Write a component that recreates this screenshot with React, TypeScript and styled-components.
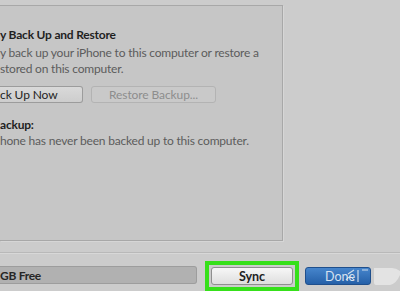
import React from 'react';
import styled, { createGlobalStyle } from 'styled-components';

const GlobalStyle = createGlobalStyle`
  html, body {
    margin: 0;
    padding: 0;
    background: #cccccc;
    overflow: hidden;
  }
  body {
    font-family: Lato, "Open Sans", "DejaVu Sans", sans-serif;
  }
`;

const Page = styled.div`
  width: 400px;
  height: 291px;
  display: flex;
  flex-direction: column;
  background: #cccccc;
  overflow: hidden;
`;

const Panel = styled.div`
  margin-top: 5px;
  width: 283px;
  height: 236px;
  box-sizing: border-box;
  background: #c6c6c6;
  border: 1px solid #a8a8a8;
  border-left: none;
  box-shadow: 1px 1px 0 #d6d6d6;
  padding-top: 21px;
`;

const Heading = styled.div<{ $gap?: number }>`
  font-size: 12px;
  font-weight: 700;
  line-height: 16px;
  letter-spacing: -0.2px;
  color: #1f1f1f;
  white-space: nowrap;
  margin-top: ${(p) => p.$gap ?? 0}px;
`;

const Body = styled.div<{ $gap?: number }>`
  font-size: 12px;
  line-height: 16px;
  letter-spacing: -0.2px;
  color: #5c5c5c;
  white-space: nowrap;
  margin-top: ${(p) => p.$gap ?? 0}px;
`;

const ButtonRow = styled.div`
  display: flex;
  gap: 8px;
  margin-top: 9px;
`;

const PanelButton = styled.div<{ $disabled?: boolean; $cut?: boolean; $w: number }>`
  width: ${(p) => p.$w}px;
  height: 17px;
  box-sizing: border-box;
  display: flex;
  align-items: center;
  justify-content: center;
  font-size: 12px;
  letter-spacing: -0.1px;
  color: ${(p) => (p.$disabled ? '#8d8d8d' : '#1f1f1f')};
  background: ${(p) =>
    p.$disabled ? '#c9c9c9' : 'linear-gradient(#d9d9d9, #cdcdcd)'};
  border: 1px solid ${(p) => (p.$disabled ? '#b3b3b3' : '#9c9c9c')};
  border-radius: 3px;
  ${(p) =>
    p.$cut &&
    `border-left: none; border-top-left-radius: 0; border-bottom-left-radius: 0; justify-content: flex-start;`}
`;

const Band = styled.div`
  height: 11px;
  border-bottom: 1px solid #b9b9b9;
  box-shadow: 0 1px 0 #d8d8d8;
`;

const BottomBar = styled.div`
  flex: 1;
  display: flex;
  align-items: flex-start;
  padding-top: 8px;
`;

const Storage = styled.div`
  width: 197px;
  height: 18px;
  margin-top: 5px;
  box-sizing: border-box;
  background: #b1b1b1;
  border: 1px solid #9d9d9d;
  border-left: none;
  border-radius: 0 3px 3px 0;
  display: flex;
  align-items: center;
  font-size: 12px;
  font-weight: 700;
  letter-spacing: -0.3px;
  color: #262626;
`;

const Highlight = styled.div`
  margin-left: 8px;
  border: 4px solid #36e01a;
  padding: 2px;
`;

const SyncButton = styled.div`
  width: 82px;
  height: 18px;
  box-sizing: border-box;
  display: flex;
  align-items: center;
  justify-content: center;
  background: linear-gradient(#f7f7f7, #dedede);
  border: 1px solid #8f8f8f;
  border-radius: 3px;
  font-size: 12.5px;
  font-weight: 700;
  color: #222;
`;

const DoneButton = styled.div`
  position: relative;
  margin-left: 6px;
  margin-top: 6px;
  width: 66px;
  height: 18px;
  box-sizing: border-box;
  display: flex;
  align-items: center;
  padding-left: 19px;
  background: linear-gradient(#4685cc, #2560a8);
  border: 1px solid #1f4f8c;
  border-radius: 3px;
  font-size: 12.5px;
  color: #d6e2f0;
`;

const Watermark = styled.svg`
  position: absolute;
  left: 38px;
  top: -4px;
  overflow: visible;
`;

export default function App() {
  return (
    <Page>
      <GlobalStyle />
      <Panel>
        <Heading>y Back Up and Restore</Heading>
        <Body $gap={2}>y back up your iPhone to this computer or restore a</Body>
        <Body>stored on this computer.</Body>
        <ButtonRow>
          <PanelButton $cut $w={83}>
            ck Up Now
          </PanelButton>
          <PanelButton $disabled $w={125}>
            Restore Backup...
          </PanelButton>
        </ButtonRow>
        <Heading $gap={14}>ackup:</Heading>
        <Body>hone has never been backed up to this computer.</Body>
      </Panel>
      <Band />
      <BottomBar>
        <Storage>GB Free</Storage>
        <Highlight>
          <SyncButton>Sync</SyncButton>
        </Highlight>
        <DoneButton>
          Done
          <Watermark width="60" height="24" viewBox="0 0 60 24">
            <path
              d="M30 4 L48 4 Q52 4 56 7 L60 9 L56 11 Q52 20 46 21 L32 21 Q30 21 30 18 Z"
              fill="#e6e6e6"
              opacity="0.9"
            />
            <path
              d="M2 16 q4 -6 8 0 M4 10 l6 -4 M14 6 v12 M18 6 h6"
              stroke="#f2f2f2"
              strokeWidth="1.2"
              fill="none"
              opacity="0.8"
            />
          </Watermark>
        </DoneButton>
      </BottomBar>
    </Page>
  );
}
